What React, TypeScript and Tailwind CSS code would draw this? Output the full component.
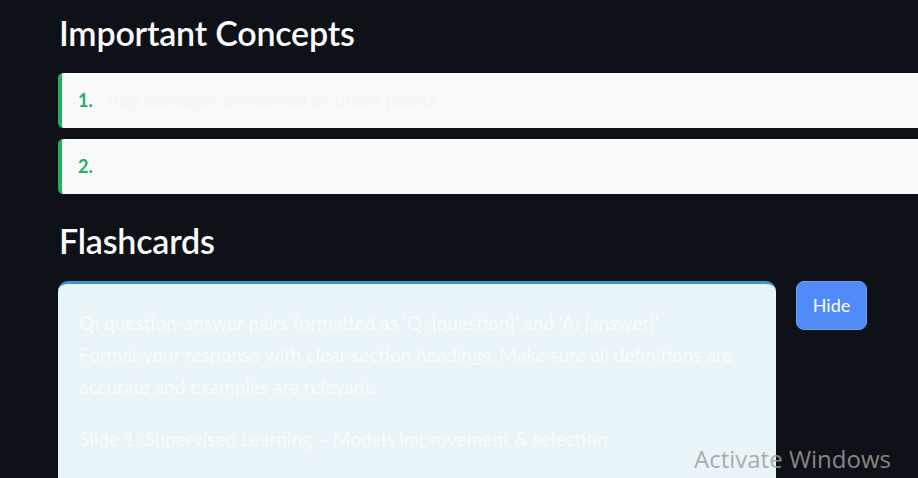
const CONCEPTS = [
    'Key concepts presented as bullet points',
    ''
]

function ConceptItem({index, text}: {index: number, text: string}) {
    return <div className='flex items-center h-[55px] bg-[#f8f9fa] border-l-4 border-[#27ae60] rounded-l-[5px] pl-[16px]'>
        <span className='text-[#27ae60] font-bold text-[18px] w-[30px]'>{index}.</span>
        <span className='text-[#f4f5f6] text-[19px]'>{text}</span>
    </div>
}

export default function App() {
    return <div className='relative h-[478px] overflow-hidden bg-[#0e1117] text-[#fafafa] font-["Lato","Noto_Sans",sans-serif]'>
        <div className='pl-[58px]'>
            <h2 className='text-[34px] font-semibold leading-[40px] pt-[13px] pl-[1px] tracking-[-0.2px]'>Important Concepts</h2>

            <div className='flex flex-col gap-[11px] mt-[20px]'>
                {CONCEPTS.map((c, i) => <ConceptItem key={i} index={i + 1} text={c}/>)}
            </div>

            <h2 className='text-[34px] font-semibold leading-[40px] mt-[27px] pl-[1px] tracking-[-0.2px]'>Flashcards</h2>

            <div className='flex items-start gap-[20px] mt-[20px]'>
                <div className='w-[718px] h-[240px] shrink-0 bg-[#e8f4f8] border-t-[3px] border-[#3498db] rounded-[10px] px-[21px] pt-[23px] text-[19px] leading-[32px] text-[#fafafa]'>
                    <p><b>Q:</b> question-answer pairs formatted as 'Q: [question]' and 'A: [answer]'</p>
                    <p>Format your response with clear section headings. Make sure all definitions are accurate and examples are relevant.</p>
                    <p className='mt-[20px]'>Slide 1: Supervised Learning – Models improvement &amp; selection</p>
                </div>
                <button className='w-[71px] h-[49px] rounded-[8px] bg-[#4f8bf9] border border-[#6c9ef5] text-white text-[18px]'>Hide</button>
            </div>
        </div>

        <div className='absolute left-[694px] top-[441px] text-[24px] text-[rgba(158,158,158,0.85)] font-["Open_Sans",sans-serif]'>Activate Windows</div>
    </div>
}
